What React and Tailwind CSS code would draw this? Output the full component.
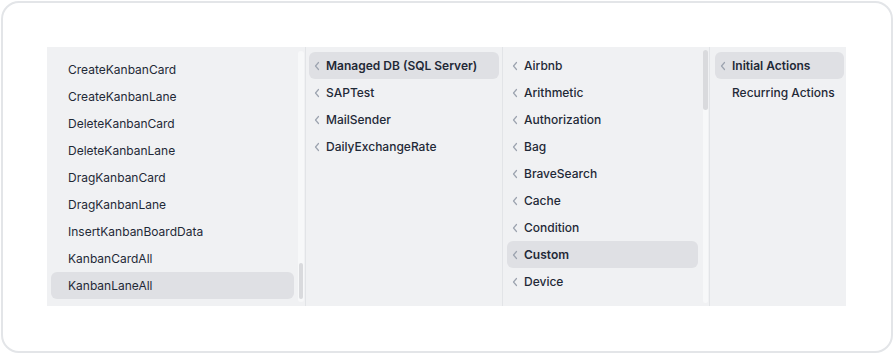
import React from "react";

const Chev = () => (
  <svg width="8" height="10" viewBox="0 0 8 10" className="shrink-0">
    <polyline points="5.5,1.5 2.5,5 5.5,8.5" fill="none" stroke="#9ca3af" strokeWidth="1.2" strokeLinecap="round" strokeLinejoin="round" />
  </svg>
);

const col1 = [
  "CreateKanbanCard",
  "CreateKanbanLane",
  "DeleteKanbanCard",
  "DeleteKanbanLane",
  "DragKanbanCard",
  "DragKanbanLane",
  "InsertKanbanBoardData",
  "KanbanCardAll",
  "KanbanLaneAll",
];
const col2 = ["Managed DB (SQL Server)", "SAPTest", "MailSender", "DailyExchangeRate"];
const col3 = ["Airbnb", "Arithmetic", "Authorization", "Bag", "BraveSearch", "Cache", "Condition", "Custom", "Device"];

export default function App() {
  return (
    <div className="w-[894px] h-[354px] p-px bg-white flex" style={{ fontFamily: "Inter, 'Noto Sans', sans-serif" }}>
      <div className="flex-1 border-2 border-[#e3e5e8] rounded-[18px] pt-[44px] pl-[44px]">
        <div className="w-[799px] h-[259px] bg-[#f0f1f3] flex text-[12px] text-[#1f2937] whitespace-nowrap">
          {/* col1 */}
          <div className="w-[259px] flex border-r border-[#e2e4e7]">
            <div className="flex-1 pt-[9px] pl-[4px] flex flex-col">
              {col1.map((t, i) => (
                <div
                  key={t}
                  className={`h-[27px] shrink-0 flex items-center pl-[17px] rounded-md ${i === col1.length - 1 ? "bg-[#dfe0e4]" : ""}`}
                >
                  {t}
                </div>
              ))}
            </div>
            <div className="w-[6px] ml-[4px] mr-[1px] my-[4px] bg-[#f7f8f9] rounded-full flex flex-col justify-end">
              <div className="h-[36px] mx-[1px] mb-[3px] bg-[#d9dadd] rounded-full" />
            </div>
          </div>
          {/* col2 */}
          <div className="w-[197px] border-r border-[#e2e4e7] pt-[5px] px-[3px] flex flex-col font-medium">
            {col2.map((t, i) => (
              <div
                key={t}
                className={`h-[27px] shrink-0 flex items-center pl-[4px] gap-[5px] rounded-md ${i === 0 ? "bg-[#dfe0e4] font-semibold" : ""}`}
              >
                <Chev />
                {t}
              </div>
            ))}
          </div>
          {/* col3 */}
          <div className="w-[207px] flex border-r border-[#e2e4e7]">
            <div className="flex-1 pt-[5px] pl-[4px] flex flex-col font-medium">
              {col3.map((t, i) => (
                <div
                  key={t}
                  className={`h-[27px] shrink-0 flex items-center pl-[4px] gap-[5px] rounded-md ${i === 7 ? "bg-[#dfe0e4] font-semibold" : ""}`}
                >
                  <Chev />
                  {t}
                </div>
              ))}
            </div>
            <div className="w-[5px] ml-[5px] mr-[1px] my-[3px] bg-[#f7f8f9] rounded-full flex flex-col">
              <div className="h-[60px] bg-[#d9dadd] rounded-full" />
            </div>
          </div>
          {/* col4 */}
          <div className="flex-1 pt-[5px] pl-[5px] pr-[2px] flex flex-col font-medium">
            <div className="h-[27px] shrink-0 flex items-center pl-[4px] gap-[5px] rounded-md bg-[#dfe0e4] font-semibold">
              <Chev />
              Initial Actions
            </div>
            <div className="h-[27px] shrink-0 flex items-center pl-[17px]">Recurring Actions</div>
          </div>
        </div>
      </div>
    </div>
  );
}
